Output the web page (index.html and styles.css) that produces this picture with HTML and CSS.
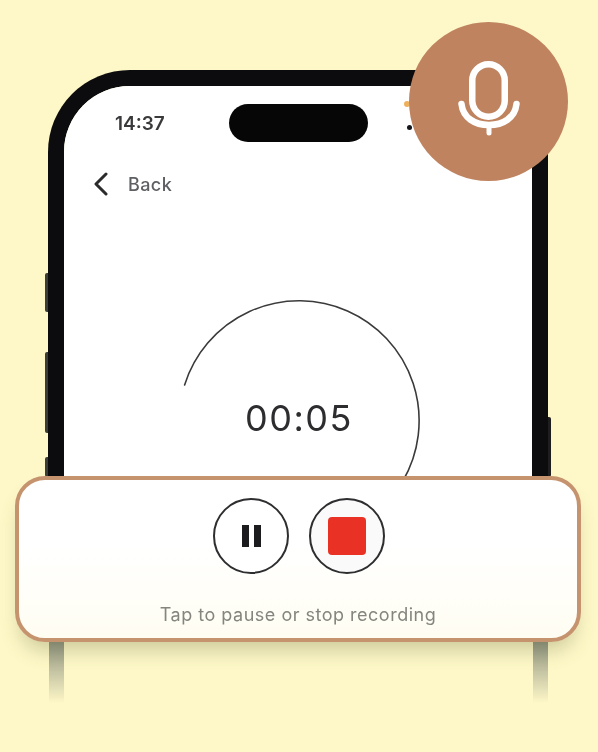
FILE: index.html
```html
<!DOCTYPE html>
<html lang="en">
<head>
<meta charset="utf-8">
<title>Recording</title>
<link rel="stylesheet" href="styles.css">
</head>
<body>
<main class="stage">
  <div class="phone">
    <span class="side-btn side-a"></span>
    <span class="side-btn side-b"></span>
    <span class="side-btn side-d"></span>
    <span class="side-btn side-c"></span>
    <div class="screen">
      <div class="status">
        <span class="clock">14:37</span>
        <span class="island"></span>
      </div>
      <span class="dot-orange"></span>
      <span class="dot-black"></span>
      <div class="nav">
        <svg class="chev" width="16" height="24" viewBox="0 0 16 24"><path d="M13 2 3 12l10 10" fill="none" stroke="#2b2b2b" stroke-width="3" stroke-linecap="round" stroke-linejoin="round"/></svg>
        <span class="back">Back</span>
      </div>
      <div class="timer">
        <svg class="ring" width="244" height="244" viewBox="0 0 244 244"><path d="M7.600 85.900A120 120 0 1 1 225.900 182" fill="none" stroke="#3b3b3b" stroke-width="1.600" stroke-linecap="round"/></svg>
        <span class="time">00:05</span>
      </div>
    </div>
  </div>
  <span class="reflect reflect-l"></span>
  <span class="reflect reflect-r"></span>
  <div class="mic">
    <svg width="66" height="87" viewBox="0 0 66 87"><rect x="16.250" y="6.250" width="32.500" height="52.500" rx="16.250" fill="none" stroke="#fff" stroke-width="6.500"/><path d="M5.500 46C7 60 19 67 33 67S59 60 60.500 46" fill="none" stroke="#fff" stroke-width="6.500" stroke-linecap="round"/><path d="M33 67v8" stroke="#fff" stroke-width="5" stroke-linecap="round"/></svg>
  </div>
  <section class="panel">
    <div class="controls">
      <button class="ctrl" type="button" aria-label="Pause"><span class="bar"></span><span class="bar"></span></button>
      <button class="ctrl stop-btn" type="button" aria-label="Stop"><span class="stop"></span></button>
    </div>
    <p class="hint">Tap to pause or stop recording</p>
  </section>
</main>
</body>
</html>
```

FILE: styles.css
```css
* { box-sizing: border-box; }
html, body { margin: 0; height: 100%; }
body {
  background: #fef8c8;
  font-family: Inter, "Liberation Sans", sans-serif;
  overflow: hidden;
}
.stage {
  position: relative;
  width: 598px;
  height: 752px;
  overflow: hidden;
  padding: 70px 50px 0 48px;
  filter: blur(0.5px);
}
.phone {
  position: relative;
  height: 420px;
  border: solid #0c0c0e;
  border-width: 16px 16px 0;
  border-radius: 82px 82px 0 0;
}
.side-btn {
  position: absolute;
  width: 3px;
  background: #3a3c38;
  border-radius: 2px 0 0 2px;
}
.side-a { left: -19px; top: 187px; height: 39px; }
.side-b { left: -19px; top: 266px; height: 81px; }
.side-d { left: -19px; top: 371px; height: 20px; }
.side-c { left: calc(100% + 16px); top: 331px; height: 60px; background: #1e1e1e; border-radius: 0 2px 2px 0; }
.screen {
  position: relative;
  height: 100%;
  background: #fff;
  border-radius: 66px 66px 0 0;
  overflow: hidden;
}
.status {
  display: flex;
  align-items: center;
  height: 38px;
  margin-top: 18px;
  padding-left: 51px;
  gap: 64px;
}
.clock {
  font-size: 19px;
  font-weight: 600;
  color: #3a3a3c;
}
.island {
  width: 139px;
  height: 38px;
  border-radius: 19px;
  background: #060607;
}
.dot-orange {
  position: absolute;
  left: 340px;
  top: 15px;
  width: 6px;
  height: 6px;
  border-radius: 50%;
  background: #eeb05f;
}
.dot-black {
  position: absolute;
  left: 343px;
  top: 39px;
  width: 5px;
  height: 5px;
  border-radius: 50%;
  background: #16161a;
}
.nav {
  display: flex;
  align-items: center;
  gap: 19px;
  margin-top: 30px;
  padding-left: 29px;
}
.chev { display: block; }
.back {
  font-size: 18px;
  color: #5e5f63;
  font-weight: 500;
  letter-spacing: 0.4px;
}
.timer {
  position: relative;
  margin: 103px 0 0 113px;
  width: 244px;
  height: 244px;
  display: flex;
  align-items: center;
  justify-content: center;
}
.ring { position: absolute; inset: 0; }
.time {
  font-size: 36px;
  font-weight: 400;
  letter-spacing: 1.500px;
  color: #2d2d30;
  margin-top: -6px;
}
.reflect {
  position: absolute;
  top: 641px;
  width: 15px;
  height: 62px;
  background: linear-gradient(#8e9280, rgba(142, 146, 128, 0));
}
.reflect-l { left: 49px; }
.reflect-r { left: 533px; }
.mic {
  position: absolute;
  left: 409px;
  top: 22px;
  width: 159px;
  height: 159px;
  border-radius: 50%;
  background: #bf835f;
  display: flex;
  align-items: center;
  justify-content: center;
}
.panel {
  position: absolute;
  left: 15px;
  top: 476px;
  width: 566px;
  height: 166px;
  border: 4px solid #c6936f;
  border-radius: 30px;
  background: linear-gradient(#fff 40%, #fffdf2);
  box-shadow: 0 14px 20px -6px rgba(90, 95, 50, 0.3);
  display: flex;
  flex-direction: column;
  align-items: center;
}
.controls {
  display: flex;
  gap: 20px;
  margin: 18px 0 0 2px;
}
.ctrl {
  width: 76px;
  height: 76px;
  padding: 0;
  border: 2px solid #2e2e30;
  border-radius: 50%;
  background: #fff;
  display: flex;
  align-items: center;
  justify-content: center;
  gap: 5px;
}
.stop-btn { background: #fafafa; }
.bar {
  width: 7px;
  height: 22px;
  background: #1c1c1e;
}
.stop {
  width: 38px;
  height: 38px;
  border-radius: 4px;
  background: #e93225;
}
.hint {
  margin: 30px 0 0;
  font-size: 18px;
  letter-spacing: 0.5px;
  color: #85857f;
}
```
